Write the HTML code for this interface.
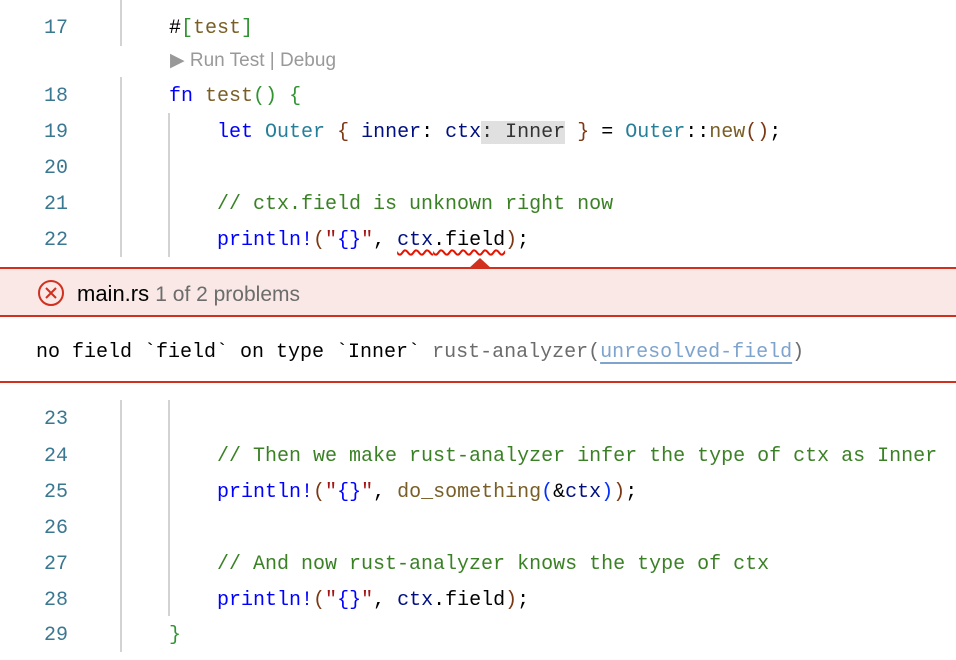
<!DOCTYPE html>
<html><head><meta charset="utf-8">
<style>
html,body{margin:0;padding:0;background:#fff;}
body{width:956px;height:660px;position:relative;overflow:hidden;font-family:"Liberation Mono",monospace;font-size:20px;}
.ln{position:absolute;left:0;width:68px;text-align:right;color:#3a7791;height:36px;line-height:36px;}
.cd{position:absolute;left:169px;height:36px;line-height:36px;white-space:pre;color:#000;}
.g{position:absolute;width:2px;background:#d3d3d3;}
.k{color:#0000ff}.f{color:#795e26}.t{color:#267f99}.v{color:#001080}.c{color:#3a8125}
.b1{color:#319331}.b2{color:#7b3814}.b3{color:#0431fa}.s{color:#a31515}.e{color:#0000ff}
.hint{background:#e0e0e0;color:#333;}
.sq{text-decoration:underline wavy #e51400;text-decoration-thickness:1.5px;text-underline-offset:4px;}
.sans{font-family:"Liberation Sans",sans-serif;}
</style></head><body>
<div class="g" style="left:120px;top:0;height:46px"></div>
<div class="g" style="left:120px;top:77px;height:180px"></div>
<div class="g" style="left:168px;top:113px;height:144px"></div>
<div class="g" style="left:120px;top:400px;height:252px"></div>
<div class="g" style="left:168px;top:400px;height:216px"></div>

<div class="ln" style="top:11px">17</div>
<div class="cd" style="top:11px">#<span class="b1">[</span><span class="f">test</span><span class="b1">]</span></div>
<div class="sans" style="position:absolute;left:170px;top:49px;font-size:19px;color:#999;line-height:24px;">▶ Run Test | Debug</div>
<div class="ln" style="top:79px">18</div>
<div class="cd" style="top:79px"><span class="k">fn</span> <span class="f">test</span><span class="b1">()</span> <span class="b1">{</span></div>
<div class="ln" style="top:115px">19</div>
<div class="cd" style="top:115px">    <span class="k">let</span> <span class="t">Outer</span> <span class="b2">{</span> <span class="v">inner</span>: <span class="v">ctx</span><span class="hint">: Inner</span> <span class="b2">}</span> = <span class="t">Outer</span>::<span class="f">new</span><span class="b2">()</span>;</div>
<div class="ln" style="top:151px">20</div>
<div class="ln" style="top:187px">21</div>
<div class="cd" style="top:187px">    <span class="c">// ctx.field is unknown right now</span></div>
<div class="ln" style="top:223px">22</div>
<div class="cd" style="top:223px">    <span class="e">println!</span><span class="b2">(</span><span class="s">"</span><span class="e">{}</span><span class="s">"</span>, <span class="sq"><span class="v">ctx</span>.field</span><span class="b2">)</span>;</div>

<svg style="position:absolute;left:466px;top:256px" width="28" height="14"><polygon points="2,13 14,2 26,13" fill="#d1301f"/></svg>
<div style="position:absolute;left:0;top:267px;width:956px;height:46px;background:#f9e8e5;border-top:2px solid #d1301f;border-bottom:2px solid #d1301f;"></div>
<svg style="position:absolute;left:37px;top:279px" width="28" height="28" viewBox="0 0 28 28"><circle cx="14" cy="14" r="12" fill="none" stroke="#d1301f" stroke-width="2"/><path d="M9 9L19 19M19 9L9 19" stroke="#d1301f" stroke-width="2"/></svg>
<div class="sans" style="position:absolute;left:77px;top:280px;font-size:22px;line-height:28px;white-space:pre;color:#000">main.rs <span style="color:#6c6c6c;font-size:21px">1 of 2 problems</span></div>
<div style="position:absolute;left:36px;top:335px;line-height:36px;white-space:pre;color:#000">no field `field` on type `Inner` <span style="color:#6c6c6c">rust-analyzer(<span style="color:#7ea3cc;text-decoration:underline;text-underline-offset:5px">unresolved-field</span>)</span></div>
<div style="position:absolute;left:0;top:381px;width:956px;height:2px;background:#d1301f"></div>

<div class="ln" style="top:402px">23</div>
<div class="ln" style="top:439px">24</div>
<div class="cd" style="top:439px">    <span class="c">// Then we make rust-analyzer infer the type of ctx as Inner</span></div>
<div class="ln" style="top:475px">25</div>
<div class="cd" style="top:475px">    <span class="e">println!</span><span class="b2">(</span><span class="s">"</span><span class="e">{}</span><span class="s">"</span>, <span class="f">do_something</span><span class="b3">(</span>&amp;<span class="v">ctx</span><span class="b3">)</span><span class="b2">)</span>;</div>
<div class="ln" style="top:511px">26</div>
<div class="ln" style="top:547px">27</div>
<div class="cd" style="top:547px">    <span class="c">// And now rust-analyzer knows the type of ctx</span></div>
<div class="ln" style="top:583px">28</div>
<div class="cd" style="top:583px">    <span class="e">println!</span><span class="b2">(</span><span class="s">"</span><span class="e">{}</span><span class="s">"</span>, <span class="v">ctx</span>.field<span class="b2">)</span>;</div>
<div class="ln" style="top:618px">29</div>
<div class="cd" style="top:618px"><span class="b1">}</span></div>
</body></html>
